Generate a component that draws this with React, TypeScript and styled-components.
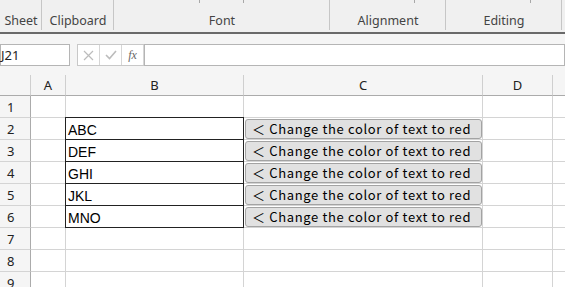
import React from "react";
import styled, { createGlobalStyle } from "styled-components";

const GlobalStyle = createGlobalStyle`
  html, body {
    margin: 0;
    padding: 0;
    background: #fff;
    overflow: hidden;
  }
  body {
    font-family: "Noto Sans", "Noto Sans CJK JP", sans-serif;
  }
`;

const groups = [
  { name: "Sheet", width: 42, ticks: [] as number[] },
  { name: "Clipboard", width: 72, ticks: [] },
  { name: "Font", width: 216, ticks: [85, 129] },
  { name: "Alignment", width: 116, ticks: [84] },
  { name: "Editing", width: 116, ticks: [84] },
];

const columns = [
  { name: "A", width: 35 },
  { name: "B", width: 178 },
  { name: "C", width: 239 },
  { name: "D", width: 70 },
  { name: "", width: 40 },
];

const values = ["ABC", "DEF", "GHI", "JKL", "MNO"];

const Page = styled.div`
  width: 565px;
  height: 287px;
  overflow: hidden;
  background: #fff;
`;

const Ribbon = styled.div`
  display: flex;
  height: 32px;
  background: #f0f0f0;
  border-bottom: 2px solid #6a6a6a;
`;

const Group = styled.div<{ $w: number }>`
  position: relative;
  flex: 0 0 ${(p) => p.$w}px;
  box-sizing: border-box;
  display: flex;
  align-items: flex-end;
  justify-content: center;
  padding-bottom: 3px;
  font-size: 12.5px;
  color: #444;
  &::after {
    content: "";
    position: absolute;
    right: 0;
    top: 0;
    height: 30px;
    width: 1px;
    background: #c6c6c6;
  }
`;

const Tick = styled.span<{ $x: number }>`
  position: absolute;
  top: 0;
  left: ${(p) => p.$x}px;
  width: 1px;
  height: 3px;
  background: #a8a8a8;
`;

const FormulaBar = styled.div`
  display: flex;
  align-items: stretch;
  height: 22px;
  padding: 10px 0 9px;
  background: #f5f5f5;
`;

const NameBox = styled.div`
  width: 70px;
  box-sizing: border-box;
  border: 1px solid #b5b5b5;
  background: #fff;
  display: flex;
  align-items: center;
  font-size: 13px;
  color: #222;
  margin-right: 7px;
`;

const FnButtons = styled.div`
  display: flex;
  border: 1px solid #c8c8c8;
  border-right: none;
  background: #fff;
`;

const FnButton = styled.div`
  width: 21px;
  border-right: 1px solid #d6d6d6;
  display: flex;
  align-items: center;
  justify-content: center;
`;

const FxLabel = styled.span`
  font-family: "Liberation Serif", serif;
  font-style: italic;
  font-size: 12px;
  color: #666;
`;

const FormulaInput = styled.div`
  flex: 1;
  border: 1px solid #b5b5b5;
  background: #fff;
`;

const Grid = styled.div`
  display: flex;
  flex-direction: column;
`;

const Row = styled.div<{ $h: number }>`
  display: flex;
  height: ${(p) => p.$h}px;
`;

const CornerCell = styled.div`
  flex: 0 0 31px;
  box-sizing: border-box;
  background: #f5f5f5;
  border-right: 1px solid #cfcfcf;
  border-bottom: 1px solid #ababab;
`;

const ColHeader = styled.div<{ $w: number }>`
  flex: 0 0 ${(p) => p.$w}px;
  box-sizing: border-box;
  background: #f5f5f5;
  border-right: 1px solid #cfcfcf;
  border-bottom: 1px solid #ababab;
  display: flex;
  align-items: center;
  justify-content: center;
  font-size: 13px;
  color: #222;
`;

const RowHeader = styled.div`
  flex: 0 0 31px;
  box-sizing: border-box;
  background: #f5f5f5;
  border-right: 1px solid #ababab;
  border-bottom: 1px solid #d4d4d4;
  display: flex;
  align-items: center;
  padding-left: 7px;
  font-size: 13px;
  color: #222;
`;

const Cell = styled.div<{ $w: number; $boxed?: boolean }>`
  flex: 0 0 ${(p) => p.$w}px;
  box-sizing: border-box;
  position: relative;
  border-right: 1px solid #d4d4d4;
  border-bottom: 1px solid #d4d4d4;
  display: flex;
  align-items: center;
  font-family: "Liberation Sans", Arial, sans-serif;
  font-size: 14px;
  color: #000;
  ${(p) =>
    p.$boxed &&
    `
    &::before {
      content: "";
      position: absolute;
      left: -1px;
      top: -1px;
      right: -1px;
      bottom: -1px;
      border: 1px solid #222;
      pointer-events: none;
    }
  `}
`;

const CellText = styled.span`
  padding-left: 2px;
  padding-top: 2px;
`;

const MacroButton = styled.button`
  position: absolute;
  left: 1px;
  top: 1px;
  width: 237px;
  height: 20px;
  box-sizing: border-box;
  margin: 0;
  padding: 0 0 0 6px;
  border: 1px solid #a3a3a3;
  border-radius: 3px;
  background: #e1e1e1;
  text-align: left;
  font-family: "Noto Sans CJK JP", "DejaVu Sans", sans-serif;
  font-size: 13px;
  font-weight: 400;
  letter-spacing: 0.65px;
  color: #000;
  white-space: nowrap;
  line-height: 18px;
`;

const XIcon = () => (
  <svg width="11" height="11" viewBox="0 0 11 11">
    <path d="M1 1L10 10M10 1L1 10" stroke="#bcbcbc" strokeWidth="1.2" fill="none" />
  </svg>
);

const CheckIcon = () => (
  <svg width="12" height="10" viewBox="0 0 12 10">
    <path d="M1 5L4.5 8.5L11 1" stroke="#bcbcbc" strokeWidth="1.6" fill="none" />
  </svg>
);

const App: React.FC = () => {
  const rows = Array.from({ length: 9 }, (_, i) => i + 1);

  return (
    <Page>
      <GlobalStyle />
      <Ribbon>
        {groups.map((g) => (
          <Group key={g.name} $w={g.width}>
            {g.ticks.map((t) => (
              <Tick key={t} $x={t} />
            ))}
            {g.name}
          </Group>
        ))}
      </Ribbon>
      <FormulaBar>
        <NameBox>J21</NameBox>
        <FnButtons>
          <FnButton>
            <XIcon />
          </FnButton>
          <FnButton>
            <CheckIcon />
          </FnButton>
          <FnButton>
            <FxLabel>fx</FxLabel>
          </FnButton>
        </FnButtons>
        <FormulaInput />
      </FormulaBar>
      <Grid>
        <Row $h={21}>
          <CornerCell />
          {columns.map((c, i) => (
            <ColHeader key={i} $w={c.width}>
              {c.name}
            </ColHeader>
          ))}
        </Row>
        {rows.map((r) => {
          const value = r >= 2 && r <= 6 ? values[r - 2] : null;
          return (
            <Row key={r} $h={22}>
              <RowHeader>{r}</RowHeader>
              {columns.map((c, i) => (
                <Cell key={i} $w={c.width} $boxed={i === 1 && value !== null}>
                  {i === 1 && value && <CellText>{value}</CellText>}
                  {i === 2 && value && (
                    <MacroButton>＜ Change the color of text to red</MacroButton>
                  )}
                </Cell>
              ))}
            </Row>
          );
        })}
      </Grid>
    </Page>
  );
};

export default App;
